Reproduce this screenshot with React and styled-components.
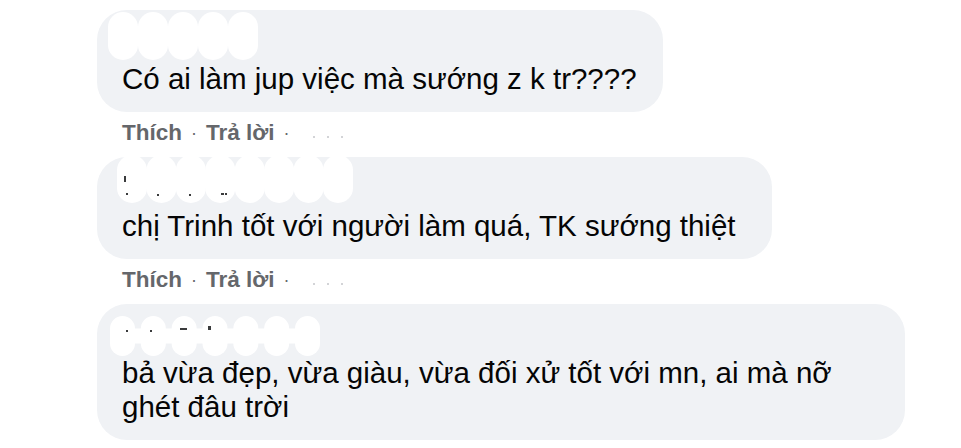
import React from "react";
import styled, { createGlobalStyle } from "styled-components";

const GlobalStyle = createGlobalStyle`
  html, body {
    margin: 0;
    padding: 0;
    background: #ffffff;
  }
  body {
    font-family: "Liberation Sans", Arial, sans-serif;
  }
`;

// names are blanked out with white scalloped blobs in the screenshot
const comments = [
  {
    id: 1,
    blob: { w: 150, h: 48, cols: 5, top: 2, left: -14, specks: [] },
    text: "Có ai làm jup việc mà sướng z k tr????",
    width: 566,
    meta: true,
  },
  {
    id: 2,
    blob: {
      w: 236,
      h: 48,
      cols: 8,
      top: -2,
      left: -5,
      specks: [
        [7, 21, 2, 6],
        [9, 38, 2, 2],
        [40, 39, 2, 2],
        [72, 39, 2, 2],
        [104, 38, 3, 2],
        [108, 38, 2, 2],
      ],
    },
    text: "chị Trinh tốt với người làm quá, TK sướng thiệt",
    width: 675,
    meta: true,
  },
  {
    id: 3,
    blob: {
      w: 210,
      h: 40,
      cols: 7,
      top: 12,
      left: -12,
      specks: [
        [16, 14, 2, 2],
        [40, 14, 2, 2],
        [70, 12, 7, 2],
        [98, 10, 3, 4],
      ],
    },
    text: "bả vừa đẹp, vừa giàu, vừa đối xử tốt với mn, ai mà nỡ ghét đâu trời",
    width: 808,
  },
];

const Page = styled.div`
  padding: 10px 0 0 97px;
  display: flex;
  flex-direction: column;
`;

const Comment = styled.div`
  display: flex;
  flex-direction: column;
  align-items: flex-start;
`;

const Bubble = styled.div`
  background: #f0f2f5;
  border-radius: 30px;
  padding: 0 20px 16px 25px;
  box-sizing: border-box;
  width: ${(p) => p.$width}px;
`;

const NameRow = styled.div`
  height: 52px;
  display: flex;
  align-items: flex-start;
`;

const Blob = styled.svg`
  display: block;
  margin-top: ${(p) => p.$top}px;
  margin-left: ${(p) => p.$left}px;
  overflow: visible;
`;

const Text = styled.div`
  font-size: 29.5px;
  line-height: 34px;
  color: #050505;
`;

const Meta = styled.div`
  display: flex;
  align-items: center;
  gap: 9px;
  padding: 9px 0 12px 25px;
  font-size: 22.5px;
  line-height: 24px;
  font-weight: 700;
  color: #65676b;
`;

const Dot = styled.span`
  font-weight: 400;
  font-size: 18px;
`;

const Time = styled.span`
  display: flex;
  gap: 12px;
  margin-left: 14px;
  padding-top: 8px;
`;

const Speck = styled.i`
  width: 2px;
  height: 2px;
  background: #d3d4d7;
`;

const Redact = ({ w, h, cols, top, left, specks }) => {
  const r = h / 3.2;
  const step = (w - 2 * r) / (cols - 1);
  const rowsY = [r, h - r];
  return (
    <Blob width={w} height={h} $top={top} $left={left}>
      <rect x={0} y={r} width={w} height={h - 2 * r} fill="#ffffff" />
      {rowsY.map((cy) =>
        Array.from({ length: cols }, (_, i) => (
          <circle key={`${cy}-${i}`} cx={r + i * step} cy={cy} r={r} fill="#ffffff" />
        ))
      )}
      {specks.map(([x, y, sw, sh], i) => (
        <rect key={i} x={x} y={y} width={sw} height={sh} fill="#3a3b3c" />
      ))}
    </Blob>
  );
};

export default function App() {
  return (
    <>
      <GlobalStyle />
      <Page>
        {comments.map((c) => (
          <Comment key={c.id}>
            <Bubble $width={c.width}>
              <NameRow>
                <Redact {...c.blob} />
              </NameRow>
              <Text>{c.text}</Text>
            </Bubble>
            {c.meta && (
              <Meta>
                <span>Thích</span>
                <Dot>·</Dot>
                <span>Trả lời</span>
                <Dot>·</Dot>
                <Time>
                  <Speck />
                  <Speck />
                  <Speck />
                </Time>
              </Meta>
            )}
          </Comment>
        ))}
      </Page>
    </>
  );
}
